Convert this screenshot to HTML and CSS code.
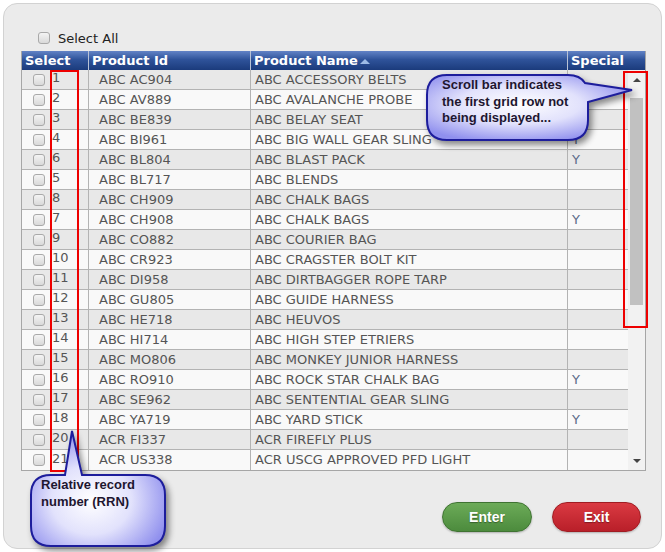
FILE: index.html
```html
<!DOCTYPE html>
<html>
	<head>
		<title>Product Selection</title>
		<meta charset="utf-8" />
		<link rel="stylesheet" href="styles.css">
	</head>
	<body>
		<div class="panel">
			<div class="select-all">
				<span class="check"></span>
				<span>Select All</span>
			</div>

			<div class="grid">
				<div class="grid-head">
					<div class="head-cell">Select</div>
					<div class="head-cell">Product Id</div>
					<div class="head-cell">Product Name <span class="sort-up"></span></div>
					<div class="head-cell">Special</div>
				</div>

				<div class="grid-body">
					<div class="rows">
						<div class="row"><div class="cell cell-select"><span class="check"></span><span class="rrn">1</span></div><div class="cell cell-id">ABC AC904</div><div class="cell cell-name">ABC ACCESSORY BELTS</div><div class="cell cell-special"></div></div>
						<div class="row"><div class="cell cell-select"><span class="check"></span><span class="rrn">2</span></div><div class="cell cell-id">ABC AV889</div><div class="cell cell-name">ABC AVALANCHE PROBE</div><div class="cell cell-special"></div></div>
						<div class="row"><div class="cell cell-select"><span class="check"></span><span class="rrn">3</span></div><div class="cell cell-id">ABC BE839</div><div class="cell cell-name">ABC BELAY SEAT</div><div class="cell cell-special"></div></div>
						<div class="row"><div class="cell cell-select"><span class="check"></span><span class="rrn">4</span></div><div class="cell cell-id">ABC BI961</div><div class="cell cell-name">ABC BIG WALL GEAR SLING</div><div class="cell cell-special">Y</div></div>
						<div class="row"><div class="cell cell-select"><span class="check"></span><span class="rrn">6</span></div><div class="cell cell-id">ABC BL804</div><div class="cell cell-name">ABC BLAST PACK</div><div class="cell cell-special">Y</div></div>
						<div class="row"><div class="cell cell-select"><span class="check"></span><span class="rrn">5</span></div><div class="cell cell-id">ABC BL717</div><div class="cell cell-name">ABC BLENDS</div><div class="cell cell-special"></div></div>
						<div class="row"><div class="cell cell-select"><span class="check"></span><span class="rrn">8</span></div><div class="cell cell-id">ABC CH909</div><div class="cell cell-name">ABC CHALK BAGS</div><div class="cell cell-special"></div></div>
						<div class="row"><div class="cell cell-select"><span class="check"></span><span class="rrn">7</span></div><div class="cell cell-id">ABC CH908</div><div class="cell cell-name">ABC CHALK BAGS</div><div class="cell cell-special">Y</div></div>
						<div class="row"><div class="cell cell-select"><span class="check"></span><span class="rrn">9</span></div><div class="cell cell-id">ABC CO882</div><div class="cell cell-name">ABC COURIER BAG</div><div class="cell cell-special"></div></div>
						<div class="row"><div class="cell cell-select"><span class="check"></span><span class="rrn">10</span></div><div class="cell cell-id">ABC CR923</div><div class="cell cell-name">ABC CRAGSTER BOLT KIT</div><div class="cell cell-special"></div></div>
						<div class="row"><div class="cell cell-select"><span class="check"></span><span class="rrn">11</span></div><div class="cell cell-id">ABC DI958</div><div class="cell cell-name">ABC DIRTBAGGER ROPE TARP</div><div class="cell cell-special"></div></div>
						<div class="row"><div class="cell cell-select"><span class="check"></span><span class="rrn">12</span></div><div class="cell cell-id">ABC GU805</div><div class="cell cell-name">ABC GUIDE HARNESS</div><div class="cell cell-special"></div></div>
						<div class="row"><div class="cell cell-select"><span class="check"></span><span class="rrn">13</span></div><div class="cell cell-id">ABC HE718</div><div class="cell cell-name">ABC HEUVOS</div><div class="cell cell-special"></div></div>
						<div class="row"><div class="cell cell-select"><span class="check"></span><span class="rrn">14</span></div><div class="cell cell-id">ABC HI714</div><div class="cell cell-name">ABC HIGH STEP ETRIERS</div><div class="cell cell-special"></div></div>
						<div class="row"><div class="cell cell-select"><span class="check"></span><span class="rrn">15</span></div><div class="cell cell-id">ABC MO806</div><div class="cell cell-name">ABC MONKEY JUNIOR HARNESS</div><div class="cell cell-special"></div></div>
						<div class="row"><div class="cell cell-select"><span class="check"></span><span class="rrn">16</span></div><div class="cell cell-id">ABC RO910</div><div class="cell cell-name">ABC ROCK STAR CHALK BAG</div><div class="cell cell-special">Y</div></div>
						<div class="row"><div class="cell cell-select"><span class="check"></span><span class="rrn">17</span></div><div class="cell cell-id">ABC SE962</div><div class="cell cell-name">ABC SENTENTIAL GEAR SLING</div><div class="cell cell-special"></div></div>
						<div class="row"><div class="cell cell-select"><span class="check"></span><span class="rrn">18</span></div><div class="cell cell-id">ABC YA719</div><div class="cell cell-name">ABC YARD STICK</div><div class="cell cell-special">Y</div></div>
						<div class="row"><div class="cell cell-select"><span class="check"></span><span class="rrn">20</span></div><div class="cell cell-id">ACR FI337</div><div class="cell cell-name">ACR FIREFLY PLUS</div><div class="cell cell-special"></div></div>
						<div class="row"><div class="cell cell-select"><span class="check"></span><span class="rrn">21</span></div><div class="cell cell-id">ACR US338</div><div class="cell cell-name">ACR USCG APPROVED PFD LIGHT</div><div class="cell cell-special"></div></div>
					</div>

					<!-- Scroll bar -->
					<div class="scrollbar">
						<span class="arrow arrow-up"></span>
						<div class="track"><div class="thumb"></div></div>
						<span class="arrow arrow-down"></span>
					</div>
				</div>
			</div>

			<div class="actions">
				<button class="btn btn-enter">Enter</button>
				<button class="btn btn-exit">Exit</button>
			</div>
		</div>

		<!-- Annotations -->
		<div class="mark mark-rrn"></div>
		<div class="mark mark-scroll"></div>

		<div class="callout callout-scroll">
			<svg class="bubble" width="220" height="80" viewBox="0 0 220 80">
				<defs>
					<radialGradient id="bubbleFill1" cx="0.45" cy="0.45" r="0.6">
						<stop offset="0" stop-color="#ffffff" />
						<stop offset="0.5" stop-color="#e2e2fc" />
						<stop offset="1" stop-color="#9090ee" />
					</radialGradient>
				</defs>
				<path d="M27,5 H148 Q160,5 165,13 L212,20 L168,32 V50 Q168,70 148,70 H27 Q7,70 7,50 V25 Q7,5 27,5 Z"
					fill="url(#bubbleFill1)" stroke="#1d1d9c" stroke-width="2" />
			</svg>
			<div class="callout-text">Scroll bar indicates<br>the first grid row not<br>being displayed...</div>
		</div>

		<div class="callout callout-rrn">
			<svg class="bubble" width="150" height="127" viewBox="0 0 150 127">
				<defs>
					<radialGradient id="bubbleFill2" cx="0.45" cy="0.6" r="0.6">
						<stop offset="0" stop-color="#ffffff" />
						<stop offset="0.5" stop-color="#e2e2fc" />
						<stop offset="1" stop-color="#9090ee" />
					</radialGradient>
				</defs>
				<path d="M26,50 H40 L47,6 L57,50 H120 Q140,50 140,70 V101 Q140,121 120,121 H26 Q6,121 6,101 V70 Q6,50 26,50 Z"
					fill="url(#bubbleFill2)" stroke="#1d1d9c" stroke-width="2" />
			</svg>
			<div class="callout-text">Relative record<br>number (RRN)</div>
		</div>
	</body>
</html>
```

FILE: styles.css
```css
* {
	padding: 0;
	margin: 0;
	box-sizing: border-box;
}

body {
	position: relative;
	width: 665px;
	height: 552px;
	overflow: hidden;
	background: #ffffff;
	font-family: "DejaVu Sans", Verdana, sans-serif;
	font-size: 13px;
	color: #555;
}

.panel {
	margin: 3px;
	width: 659px;
	height: 546px;
	background: #ebebeb;
	border: 1px solid #d2d2d2;
	border-radius: 14px;
	padding: 25px 0 0 17px;
}

.check {
	display: inline-block;
	width: 12px;
	height: 12px;
	border: 1px solid #a9a9a9;
	border-radius: 3px;
	background: linear-gradient(#f4f4f4, #d9d9d9);
}

.select-all {
	display: flex;
	align-items: center;
	gap: 8px;
	height: 18px;
	padding-left: 17px;
	color: #222;
}

.grid {
	margin-top: 4px;
	width: 625px;
	border: 1px solid #a6a6a6;
	border-top: none;
	background: #f9f9f9;
}

.grid-head {
	display: grid;
	grid-template-columns: 66px 162px 317px 1fr;
	height: 19px;
	background: linear-gradient(#6283c6, #2f539a 45%, #1b3b7c);
}

.head-cell {
	padding-left: 3px;
	color: #fff;
	font-weight: bold;
	font-size: 13px;
	line-height: 19px;
	white-space: nowrap;
}
.head-cell + .head-cell {
	border-left: 1px solid #b8c2d6;
}

.sort-up {
	display: inline-block;
	width: 0;
	height: 0;
	border-left: 5px solid transparent;
	border-right: 5px solid transparent;
	border-bottom: 5px solid #9dbbe6;
	margin-left: -2px;
	vertical-align: 1px;
}

.grid-body {
	display: flex;
}

.rows {
	width: 606px;
}

.row {
	display: grid;
	grid-template-columns: 66px 162px 317px 1fr;
	height: 20px;
	border-bottom: 1px solid #b3b3b3;
	background: #f9f9f9;
}
.row:nth-child(odd) {
	background: #e8e8e8;
}
.row:last-child {
	border-bottom: none;
}

.cell {
	line-height: 20px;
	white-space: nowrap;
	overflow: hidden;
}
.cell + .cell {
	border-left: 1px solid #b3b3b3;
}

.cell-select {
	display: flex;
	align-items: center;
	gap: 7px;
	padding-left: 11px;
}

.rrn {
	line-height: 15px;
	margin-top: -4px;
}

.cell-id {
	padding-left: 10px;
}

.cell-name {
	padding-left: 4px;
}

.cell-special {
	padding-left: 4px;
	color: #5b6a88;
}

.scrollbar {
	flex: 1;
	display: flex;
	flex-direction: column;
	align-items: center;
	background: #f2f2f2;
}

.arrow {
	display: block;
	width: 0;
	height: 0;
	border-left: 4px solid transparent;
	border-right: 4px solid transparent;
}
.arrow-up {
	margin-top: 8px;
	border-bottom: 4px solid #444;
}
.arrow-down {
	margin-bottom: 7px;
	border-top: 4px solid #444;
}

.track {
	flex: 1;
	width: 100%;
	padding: 16px 2px 0 2px;
}

.thumb {
	height: 207px;
	background: #c1c1c1;
}

.actions {
	display: flex;
	justify-content: flex-end;
	gap: 20px;
	margin-top: 31px;
	padding-right: 20px;
}

.btn {
	width: 90px;
	height: 30px;
	border-radius: 15px;
	font-family: "Liberation Sans", Arial, sans-serif;
	font-weight: bold;
	font-size: 14px;
	color: #fff;
	text-shadow: 0 1px 1px rgba(0, 0, 0, 0.35);
	box-shadow: 0 1px 2px rgba(0, 0, 0, 0.25);
}

.btn-enter {
	background: linear-gradient(#6cab58, #4c8b3d);
	border: 1px solid #3f7332;
}

.btn-exit {
	width: 89px;
	background: linear-gradient(#da3a42, #b91f29);
	border: 1px solid #a01c22;
}

/* Annotations */
.mark {
	position: absolute;
	border: 2px solid #ee0000;
}
.mark-rrn {
	left: 50px;
	top: 70px;
	width: 29px;
	height: 402px;
}
.mark-scroll {
	left: 623px;
	top: 71px;
	width: 25px;
	height: 257px;
}

.callout {
	position: absolute;
}
.callout-scroll {
	left: 420px;
	top: 70px;
}
.callout-rrn {
	left: 25px;
	top: 425px;
}

.bubble {
	display: block;
	filter: drop-shadow(3px 4px 3px rgba(0, 0, 0, 0.45));
}

.callout-text {
	position: absolute;
	font-family: "Liberation Sans", Arial, sans-serif;
	font-weight: bold;
	font-size: 13px;
	line-height: 16.5px;
	color: #1e1630;
	white-space: nowrap;
}
.callout-scroll .callout-text {
	left: 22px;
	top: 7px;
}
.callout-rrn .callout-text {
	left: 16px;
	top: 52px;
}
```
